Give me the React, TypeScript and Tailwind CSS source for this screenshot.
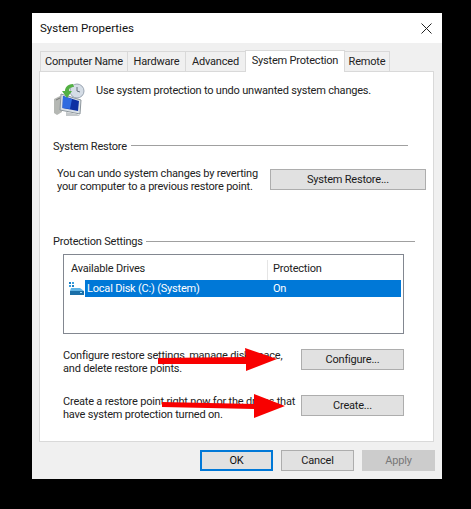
const tabs = [
  { label: "Computer Name", w: "w-[87px]" },
  { label: "Hardware", w: "w-[58px]" },
  { label: "Advanced", w: "w-[60px]" },
];

const RestoreIcon = () => (
  <svg width="34" height="34" viewBox="0 0 34 34" className="shrink-0">
    <path d="M1 16 L7 13 L9 14 L9 29 L4 32 L1 30 Z" fill="#b5b8b4" />
    <path d="M3 17 L7 15" stroke="#777" strokeWidth="1" />
    <path d="M8 11 L28 17 L27 31 L7 27 Z" fill="#d9e0e6" stroke="#8d969c" strokeWidth="1" />
    <path d="M10 13 L26 18 L25 28 L9.5 25 Z" fill="#0c2fa3" />
    <path d="M10 13 L19 16 L17 26 L9.5 25 Z" fill="#2f6be0" />
    <path d="M13 29 L24 31 L27 33 L13 33 Z" fill="#c4c8ca" />
    <circle cx="24" cy="8" r="7" fill="#d5dde6" stroke="#9aa5b2" strokeWidth="1" />
    <path d="M24 4 L24 8 L27 9" stroke="#66707c" strokeWidth="1" fill="none" />
    <path d="M20 1 C14 1 12 5 12 8 L9 8 L14 15 L19 8 L16 8 C16 5 18 4 21 4 Z" fill="#52b043" />
  </svg>
);

const DiskIcon = () => (
  <svg width="15" height="14" viewBox="0 0 15 14" className="shrink-0">
    <rect x="0" y="0" width="2" height="2" fill="#1d7fc4" />
    <rect x="3" y="0" width="2" height="2" fill="#39a0e0" />
    <rect x="0" y="3" width="2" height="2" fill="#39a0e0" />
    <rect x="3" y="3" width="2" height="2" fill="#1d7fc4" />
    <path d="M2 6 L11 6 L15 9 L1 9 Z" fill="#5fb4e6" />
    <rect x="1" y="9" width="14" height="4" fill="#1a6fa8" />
    <rect x="11" y="10" width="2" height="1" fill="#9fe0ff" />
  </svg>
);

const Btn = ({ label, className }: { label: string; className: string }) => (
  <div className={"flex shrink-0 items-center justify-center border border-[#adadad] bg-[#e1e1e1] text-[#1a1a1a] " + className}>
    {label}
  </div>
);

const Group = ({ title, lineClass }: { title: string; lineClass: string }) => (
  <div className="flex items-center h-[16px]">
    <span className="text-[#222]">{title}</span>
    <div className={"h-px bg-[#a0a0a0] " + lineClass} />
  </div>
);

export default function App() {
  return (
    <div
      className="relative w-[471px] h-[509px] bg-black overflow-hidden pt-[13px] pl-[32px] text-[11px] leading-[13px] tracking-[-0.2px] text-[#222] whitespace-nowrap"
      style={{ fontFamily: 'Roboto, "Liberation Sans", sans-serif' }}
    >
      <div className="w-[410px] h-[466px] bg-[#f0f0f0] flex flex-col">
        {/* title bar */}
        <div className="h-[30px] bg-white flex items-center justify-between pl-[8px] pr-[10px] shrink-0">
          <span className="text-[11.5px] tracking-normal text-[#111]">System Properties</span>
          <svg width="11" height="11" viewBox="0 0 11 11">
            <path d="M0.5 0.5 L10.5 10.5 M10.5 0.5 L0.5 10.5" stroke="#222" strokeWidth="1" />
          </svg>
        </div>

        {/* tabs */}
        <div className="flex items-end h-[27px] pl-[8px] shrink-0 mt-[1px]">
          {tabs.map((t) => (
            <div key={t.label} className={"h-[20px] flex items-center justify-center border border-b-0 border-r-0 border-[#d9d9d9] bg-[#f0f0f0] " + t.w}>
              {t.label}
            </div>
          ))}
          <div className="relative z-10 w-[100px] h-[22px] -mb-px pb-[2px] flex items-center justify-center border border-b-0 border-[#d9d9d9] bg-white">
            System Protection
          </div>
          <div className="w-[45px] h-[20px] flex items-center justify-center border border-b-0 border-l-0 border-[#d9d9d9] bg-[#f0f0f0]">
            Remote
          </div>
        </div>

        {/* panel */}
        <div className="mx-[7px] w-[395px] h-[371px] bg-white border border-[#d9d9d9] pl-[13px] shrink-0">
          <div className="flex items-start pt-[11px] h-[66px]">
            <RestoreIcon />
            <span className="ml-[9px] mt-[1px]">Use system protection to undo unwanted system changes.</span>
          </div>

          <Group title="System Restore" lineClass="ml-[4px] w-[277px] mb-[1px]" />
          <div className="flex items-start mt-[12px] pl-[4px]">
            <p className="w-[213px] mt-[1px] leading-[13px]">
              You can undo system changes by reverting
              <br />
              your computer to a previous restore point.
            </p>
            <Btn label="System Restore..." className="w-[156px] h-[21px] mt-[3px]" />
          </div>

          <div className="mt-[40px]">
            <Group title="Protection Settings" lineClass="ml-[3px] w-[269px]" />
          </div>

          {/* drives list */}
          <div className="ml-[10px] mt-[5px] w-[341px] h-[80px] border border-[#828790] bg-white pt-[5px]">
            <div className="flex h-[20px] items-center">
              <span className="pl-[7px] pb-[4px] w-[204px] border-r border-[#e5e5e5] h-full flex items-center">Available Drives</span>
              <span className="pl-[5px] pb-[4px]">Protection</span>
            </div>
            <div className="flex items-center h-[17px] pl-[5px]">
              <DiskIcon />
              <div className="flex items-center h-full w-[316px] ml-[1px] bg-[#0078d7] text-white">
                <span className="pl-[2px] w-[186px]">Local Disk (C:) (System)</span>
                <span className="pl-[2px]">On</span>
              </div>
            </div>
          </div>

          <div className="ml-[10px] mt-[15px] w-[341px] h-[21px] flex items-center justify-between">
            <p className="mt-[4px]">
              Configure restore settings, manage disk space,
              <br />
              and delete restore points.
            </p>
            <Btn label="Configure..." className="w-[103px] h-[21px]" />
          </div>

          <div className="ml-[10px] mt-[25px] w-[341px] h-[21px] flex items-center justify-between">
            <p className="mt-[4px]">
              Create a restore point right now for the drives that
              <br />
              have system protection turned on.
            </p>
            <Btn label="Create..." className="w-[103px] h-[21px]" />
          </div>
        </div>

        {/* dialog buttons */}
        <div className="flex pl-[168px] mt-[8px] gap-[8px]">
          <div className="w-[73px] h-[21px] flex items-center justify-center border-2 border-[#0078d7] bg-[#e1e1e1] text-[#111]">OK</div>
          <Btn label="Cancel" className="w-[73px] h-[21px]" />
          <div className="w-[73px] h-[21px] flex items-center justify-center border border-[#cccccc] bg-[#cccccc] text-[#787878]">Apply</div>
        </div>
      </div>

      {/* red annotation arrows */}
      <svg width="140" height="80" viewBox="0 0 140 80" className="absolute left-[155px] top-[344px]">
        <path d="M3 14 L91 13 L90 4 L122 15 L91 27 L91 20 L3 20 Z" fill="#f80000" />
        <path d="M7 58 L99 60 L99 50 L130 62 L99 74 L99 65 L7 63 Z" fill="#f80000" />
      </svg>
    </div>
  );
}
